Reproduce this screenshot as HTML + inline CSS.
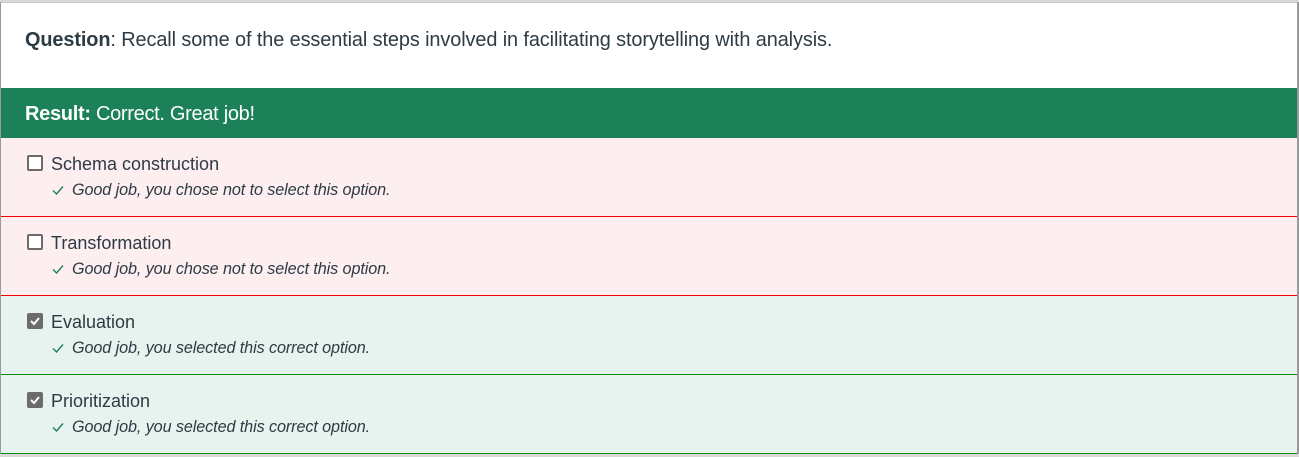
<!DOCTYPE html>
<html><head><meta charset="utf-8"><style>
html,body{margin:0;padding:0;width:1299px;height:457px;background:#d9d9d9;overflow:hidden;font-family:"Liberation Sans",sans-serif;color:#2d3b45;position:relative}
.a{position:absolute}
.q{left:25px;top:29px;font-size:19.9px;white-space:nowrap;letter-spacing:-0.1px}
.res{left:1px;top:88px;width:1296px;height:50px;background:#1c8159;color:#fff;font-size:20px;letter-spacing:-0.3px}
.res span{position:absolute;left:24px;top:15px}
.row{left:1px;width:1296px;height:78px}
.r{background:#fdeef0}
.g{background:#e6f3ee}
.ln{left:1px;width:1296px;height:1px}
.cb{left:27px;width:16px;height:16px;box-sizing:border-box;border:2px solid #6b6b6b;border-radius:2px;background:#fff}
.cb.on{background:#6b6b6b}
.cb svg{position:absolute;left:0;top:0}
.lab{left:51px;font-size:18px;color:#2d3b45;white-space:nowrap}
.fb{left:72px;font-size:16.2px;font-style:italic;color:#2d3b45;white-space:nowrap;letter-spacing:-0.1px}
.ck{left:51px}
</style></head><body>
<div class="a" style="left:0;top:2px;width:1299px;height:452px;background:#fff"></div>
<div class="a" style="left:0;top:2px;width:1299px;height:1px;background:#c8c8c8"></div>
<div class="a" style="left:0;top:2px;width:1px;height:452px;background:#9a9a9a"></div>
<div class="a" style="left:1297px;top:2px;width:2px;height:452px;background:#9a9a9a"></div>
<div class="a q"><b>Question</b>: Recall some of the essential steps involved in facilitating storytelling with analysis.</div>
<div class="a res"><span><b>Result:</b> Correct. Great job!</span></div>

<div class="a row r" style="top:138px"></div>
<div class="a row r" style="top:217px"></div>
<div class="a row g" style="top:296px"></div>
<div class="a row g" style="top:375px"></div>
<div class="a ln" style="top:216px;background:#ee0000"></div>
<div class="a ln" style="top:295px;background:#ee0000"></div>
<div class="a ln" style="top:374px;background:#0a8a0a"></div>
<div class="a ln" style="top:453px;background:#0a8a0a"></div>

<div class="a cb" style="top:155px"></div>
<div class="a lab" style="top:154px">Schema construction</div>
<svg class="a ck" style="top:183px" width="14" height="14" viewBox="0 0 14 14"><path d="M2 7.5 L5.5 11 L12 3.5" stroke="#1c8159" stroke-width="1.4" fill="none"/></svg>
<div class="a fb" style="top:181px">Good job, you chose not to select this option.</div>

<div class="a cb" style="top:234px"></div>
<div class="a lab" style="top:233px">Transformation</div>
<svg class="a ck" style="top:262px" width="14" height="14" viewBox="0 0 14 14"><path d="M2 7.5 L5.5 11 L12 3.5" stroke="#1c8159" stroke-width="1.4" fill="none"/></svg>
<div class="a fb" style="top:260px">Good job, you chose not to select this option.</div>

<div class="a cb on" style="top:313px"><svg width="12" height="12" viewBox="0 0 12 12"><path d="M2 6 L5 9 L10 3" stroke="#fff" stroke-width="2" fill="none"/></svg></div>
<div class="a lab" style="top:312px">Evaluation</div>
<svg class="a ck" style="top:341px" width="14" height="14" viewBox="0 0 14 14"><path d="M2 7.5 L5.5 11 L12 3.5" stroke="#1c8159" stroke-width="1.4" fill="none"/></svg>
<div class="a fb" style="top:339px">Good job, you selected this correct option.</div>

<div class="a cb on" style="top:392px"><svg width="12" height="12" viewBox="0 0 12 12"><path d="M2 6 L5 9 L10 3" stroke="#fff" stroke-width="2" fill="none"/></svg></div>
<div class="a lab" style="top:391px">Prioritization</div>
<svg class="a ck" style="top:420px" width="14" height="14" viewBox="0 0 14 14"><path d="M2 7.5 L5.5 11 L12 3.5" stroke="#1c8159" stroke-width="1.4" fill="none"/></svg>
<div class="a fb" style="top:418px">Good job, you selected this correct option.</div>
</body></html>
